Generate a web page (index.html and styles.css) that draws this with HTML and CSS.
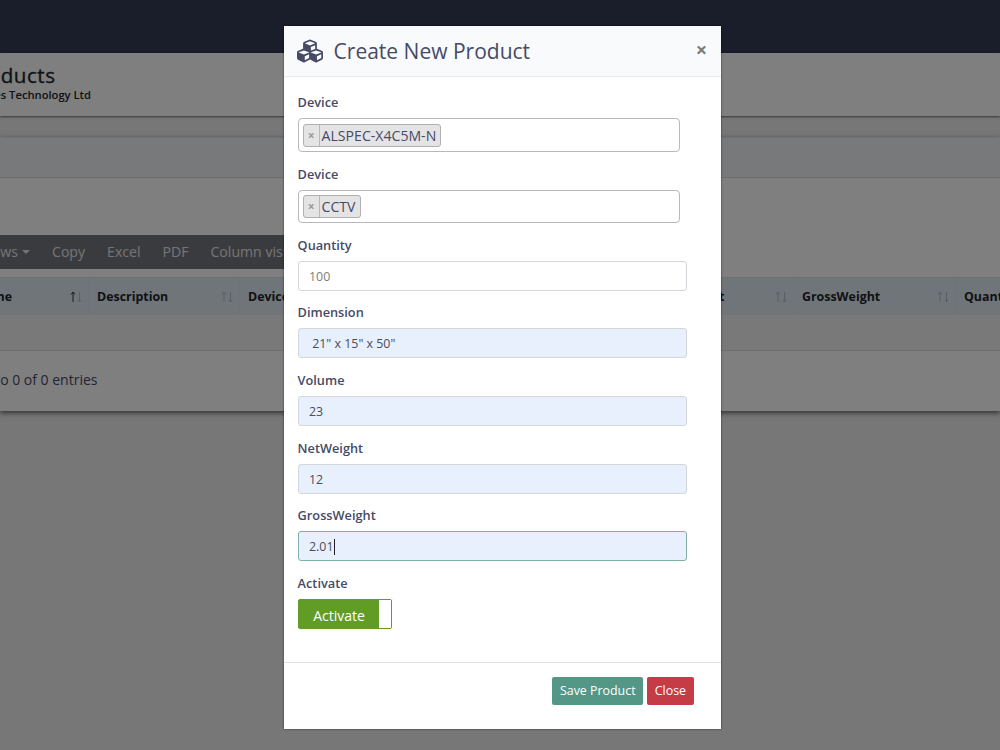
FILE: index.html
```html
<!DOCTYPE html>
<html lang="en">
<head>
    <meta charset="UTF-8">
    <meta name="viewport" content="width=device-width, initial-scale=1.0">
    <title>Products</title>
    <link rel="stylesheet" href="styles.css">
</head>
<body>
    <div class="page">
        <div class="topbar"></div>
        <div class="page-header">
            <h1><span>Products</span></h1>
            <p><span>Alliances Technology Ltd</span></p>
        </div>
        <div class="card">
            <div class="card-header"></div>
            <div class="card-body">
                <div class="dt-buttons">
                    <button class="first"><span>Show 10 rows</span><i class="caret"></i></button>
                    <button>Copy</button>
                    <button>Excel</button>
                    <button>PDF</button>
                    <button>Column visibility</button>
                </div>
                <div class="table-head">
                    <div class="th col-name"><span>Name</span><svg class="sort asc" viewBox="0 0 12 12"><path class="up" d="M3 11V1M1 3.5L3 1L5 3.5"/><path class="down" d="M9.5 1v10M7.8 8.8l1.7 2.2l1.7-2.2"/></svg></div>
                    <div class="th col-desc"><span>Description</span><svg class="sort" viewBox="0 0 12 12"><path class="up" d="M3 11V1M1 3.5L3 1L5 3.5"/><path class="down" d="M9.5 1v10M7.8 8.8l1.7 2.2l1.7-2.2"/></svg></div>
                    <div class="th col-device"><span>Device</span></div>
                    <div class="th col-net"><span>NetWeight</span><svg class="sort" viewBox="0 0 12 12"><path class="up" d="M3 11V1M1 3.5L3 1L5 3.5"/><path class="down" d="M9.5 1v10M7.8 8.8l1.7 2.2l1.7-2.2"/></svg></div>
                    <div class="th col-gross"><span>GrossWeight</span><svg class="sort" viewBox="0 0 12 12"><path class="up" d="M3 11V1M1 3.5L3 1L5 3.5"/><path class="down" d="M9.5 1v10M7.8 8.8l1.7 2.2l1.7-2.2"/></svg></div>
                    <div class="th col-qty"><span>Quantity</span></div>
                </div>
                <div class="table-row"></div>
                <div class="table-info"><span>Showing 0 to 0 of 0 entries</span></div>
            </div>
        </div>
    </div>

    <div class="backdrop">
        <div class="modal">
            <div class="modal-header">
                <svg class="cubes" viewBox="0 0 512 512"><path d="M488.6 250.2L392 214V105.5c0-15-9.3-28.4-23.4-33.7l-100-37.5c-8.1-3.1-17.1-3.1-25.3 0l-100 37.5c-14.1 5.3-23.4 18.7-23.4 33.7V214l-96.6 36.2C9.3 255.5 0 268.9 0 283.9V394c0 13.6 7.7 26.1 19.9 32.2l100 50c10.1 5.1 22.1 5.1 32.2 0l103.9-52 103.9 52c10.1 5.1 22.1 5.1 32.2 0l100-50c12.2-6.1 19.9-18.6 19.9-32.2V283.9c0-15-9.3-28.4-23.4-33.7zM358 214.8l-85 31.9v-68.2l85-37v73.3zM154 104.1l102-38.2 102 38.2v.6l-102 41.4-102-41.4v-.6zm84 291.1l-85 42.5v-79.1l85-38.8v75.4zm0-112l-102 41.4-102-41.4v-.6l102-38.2 102 38.2v.6zm240 112l-85 42.5v-79.1l85-38.8v75.4zm0-112l-102 41.4-102-41.4v-.6l102-38.2 102 38.2v.6z"/></svg>
                <h2>Create New Product</h2>
                <button class="close">&times;</button>
            </div>
            <div class="modal-body">
                <div class="form-group">
                    <label>Device</label>
                    <div class="select"><div class="tag"><b>&times;</b><span>ALSPEC-X4C5M-N</span></div></div>
                </div>
                <div class="form-group">
                    <label>Device</label>
                    <div class="select"><div class="tag"><b>&times;</b><span>CCTV</span></div></div>
                </div>
                <div class="form-group">
                    <label>Quantity</label>
                    <div class="input placeholder">100</div>
                </div>
                <div class="form-group">
                    <label>Dimension</label>
                    <div class="input filled">&nbsp;21" x 15" x 50"</div>
                </div>
                <div class="form-group">
                    <label>Volume</label>
                    <div class="input filled">23</div>
                </div>
                <div class="form-group">
                    <label>NetWeight</label>
                    <div class="input filled">12</div>
                </div>
                <div class="form-group">
                    <label>GrossWeight</label>
                    <div class="input filled focus">2.01<i class="cursor"></i></div>
                </div>
                <div class="form-group">
                    <label>Activate</label>
                    <div class="toggle"><span>Activate</span><i></i></div>
                </div>
            </div>
            <div class="modal-footer">
                <button class="btn save">Save Product</button>
                <button class="btn danger">Close</button>
            </div>
        </div>
    </div>
</body>
</html>
```
FILE: styles.css
```css
* {
    box-sizing: border-box;
}

html, body {
    margin: 0;
    padding: 0;
    height: 100%;
    overflow: hidden;
}

body {
    font-family: "Open Sans", sans-serif;
    font-size: 14px;
    color: #464a67;
    background: #eeeeee;
}

button {
    font-family: inherit;
    border: none;
    cursor: pointer;
}

.page {
    height: 750px;
    overflow: hidden;
}

.topbar {
    height: 52.5px;
    background: #353c54;
}

/* left part of the page is scrolled out, texts are aligned by their right edge */
.page-header {
    height: 63.5px;
    background: #ffffff;
    box-shadow: 0 1px 2px rgba(0, 0, 0, 0.55);
    padding-top: 9.5px;
}

.page-header h1,
.page-header p {
    display: flex;
    justify-content: flex-end;
    margin: 0;
    white-space: nowrap;
    color: #212529;
}

.page-header h1 {
    width: 55.5px;
    font-size: 20.6px;
    font-weight: 500;
    line-height: 26px;
    letter-spacing: 0.5px;
    -webkit-text-stroke: 0.35px #212529;
}

.page-header p {
    width: 91px;
    font-size: 11.2px;
    font-weight: 600;
    line-height: 13px;
}

.card {
    margin-top: 21px;
    height: 274px;
    background: #ffffff;
    box-shadow: 0 2px 5px rgba(0, 0, 0, 0.6);
}

.card-header {
    height: 41px;
    background: #f0f2f5;
    border-top: 1px solid #e2e4e6;
    border-bottom: 1px solid #d8dadc;
}

.card-body {
    padding-top: 57px;
}

.dt-buttons {
    display: flex;
    width: 284px;
    height: 34px;
    overflow: hidden;
    background: #75777d;
}

.dt-buttons button {
    flex: none;
    padding: 0 11px;
    background: none;
    color: #e9e9ea;
    font-size: 14.1px;
    line-height: 34px;
}

.dt-buttons .first {
    display: flex;
    justify-content: flex-end;
    align-items: center;
    width: 41px;
    white-space: nowrap;
}

.caret {
    flex: none;
    margin-left: 4px;
    border: 4px solid transparent;
    border-top-color: #e9e9ea;
    border-bottom: none;
}

.table-head {
    display: flex;
    height: 38px;
    margin-top: 8px;
    background: #e0ebf5;
    border-top: 1px solid #d9e3ec;
}

.th {
    display: flex;
    flex: none;
    justify-content: space-between;
    align-items: center;
    padding: 0 6px 0 8px;
    border-right: 1px solid #dbe6f0;
    color: #212529;
    font-size: 12.4px;
    font-weight: 700;
}

.col-name { width: 122px; margin-left: -33px; }
.col-desc { width: 151px; }
.col-device { width: 410px; }
.col-net { width: 144px; }
.col-gross { width: 162px; }
.col-qty { width: 120px; }

.sort {
    width: 12px;
    height: 12px;
    fill: none;
    stroke: #b4bfca;
    stroke-width: 1;
}

.sort.asc .up {
    stroke: #30353b;
}

.table-row {
    height: 36px;
    background: #f2f2f2;
    border-bottom: 1px solid #dcdfe3;
}

.table-info {
    display: flex;
    justify-content: flex-end;
    width: 97.5px;
    padding-top: 18px;
    white-space: nowrap;
    line-height: 21px;
}

.backdrop {
    position: absolute;
    inset: 0;
    padding-top: 25.6px;
    background: rgba(0, 0, 0, 0.5);
}

.modal {
    display: flex;
    flex-direction: column;
    width: 437px;
    height: 703px;
    margin-left: 283.6px;
    background: #ffffff;
    box-shadow: 0 0 2px rgba(0, 0, 0, 0.6);
}

.modal-header {
    display: flex;
    align-items: center;
    height: 51px;
    padding: 0 13.4px 0 13px;
    background: #f8fafc;
    border-bottom: 1px solid #e8ebef;
}

.cubes {
    width: 26px;
    height: 26px;
    fill: #464a67;
}

.modal-header h2 {
    flex: 1;
    margin: 0 0 0 11px;
    font-size: 21px;
    font-weight: 400;
}

.close {
    padding: 0;
    margin-top: -3px;
    background: none;
    color: #7b7b7b;
    font-size: 20px;
    font-weight: 700;
}

.modal-body {
    flex: 1;
    padding: 15.8px 34px 0 14px;
}

.form-group {
    margin-bottom: 11.6px;
}

.form-group label {
    display: block;
    margin-bottom: 6px;
    font-size: 12.75px;
    font-weight: 600;
    line-height: 20px;
}

.select {
    display: flex;
    align-items: center;
    width: 382px;
    height: 33.6px;
    padding-left: 4px;
    border: 1px solid #b8b8b8;
    border-radius: 4px;
}

.tag {
    display: flex;
    height: 23px;
    background: #e4e4e4;
    border: 1px solid #b0b0b0;
    border-radius: 3px;
    font-size: 14.1px;
    line-height: 21px;
}

.tag b {
    width: 16px;
    border-right: 1px solid #b8b8b8;
    color: #999999;
    font-size: 12px;
    text-align: center;
}

.tag span {
    padding: 0 4px 0 2px;
}

.input {
    display: flex;
    align-items: center;
    height: 30px;
    padding: 1px 11px 0 10.4px;
    border: 1px solid #d3d6da;
    border-radius: 3px;
    color: #494d57;
    font-size: 12.4px;
}

.placeholder {
    color: #7d7d7d;
}

.filled {
    background: #e8effd;
}

.focus {
    border-color: #7fb0a6;
}

.cursor {
    width: 1px;
    height: 16px;
    background: #222222;
}

.toggle {
    display: flex;
    width: 94px;
    height: 30px;
    background: #619c26;
    border: 1px solid #619c26;
    border-radius: 2px;
    color: #ffffff;
    line-height: 31px;
}

.toggle span {
    flex: 1;
    padding-left: 14.6px;
}

.toggle i {
    width: 12px;
    background: #ffffff;
}

.modal-footer {
    display: flex;
    justify-content: flex-end;
    align-items: flex-start;
    gap: 4px;
    height: 67px;
    padding: 14px 27px 0 0;
    border-top: 1px solid #dde3e6;
}

.btn {
    height: 28px;
    padding: 0 7.6px;
    border-radius: 2px;
    color: #ffffff;
    font-size: 12.4px;
}

.save {
    background: #549786;
}

.danger {
    background: #c53c46;
}
```
